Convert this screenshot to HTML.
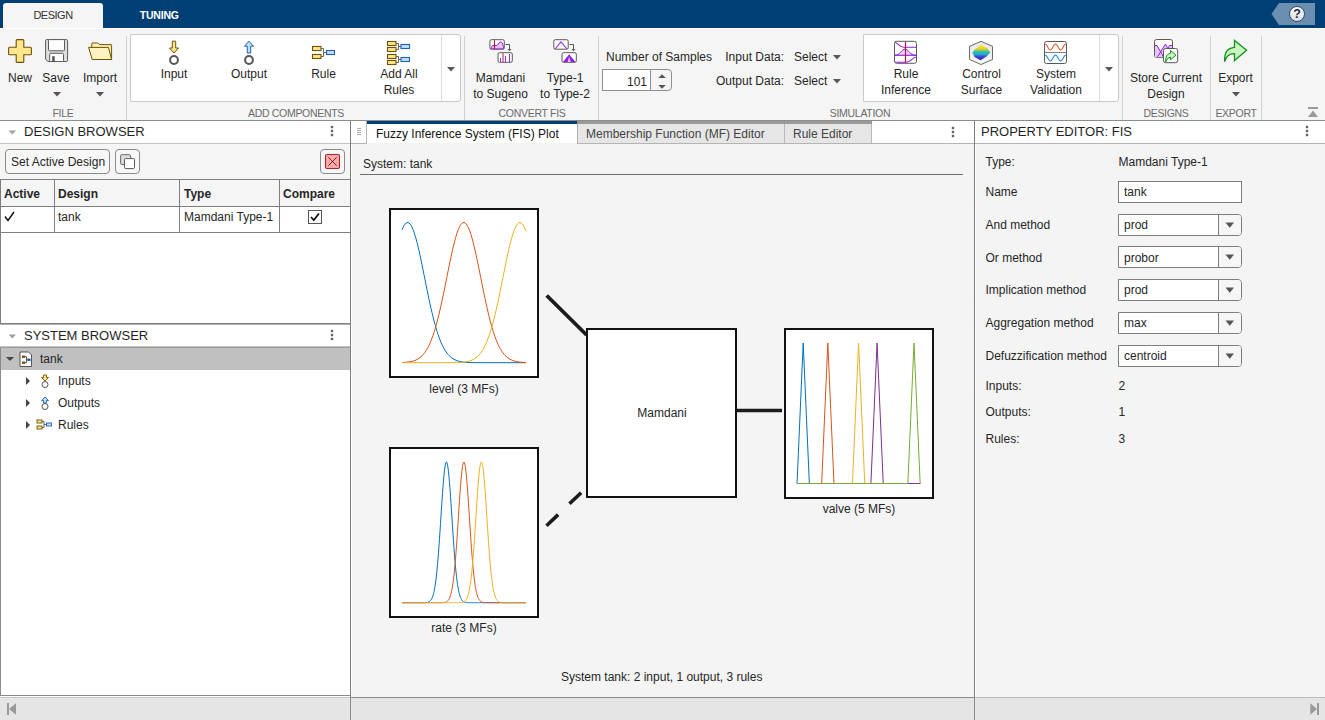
<!DOCTYPE html>
<html><head><meta charset="utf-8">
<style>
html,body{margin:0;padding:0}
body{width:1325px;height:720px;overflow:hidden;position:relative;background:#f5f5f5;font-family:"Liberation Sans",sans-serif;color:#262626}
.a{position:absolute}
.t{position:absolute;white-space:nowrap;line-height:1;font-size:12px}
.c{text-align:center;transform:translateX(-50%)}
.sec{position:absolute;white-space:nowrap;line-height:1;font-size:10.5px;letter-spacing:-0.3px;color:#6b6b6b;transform:translateX(-50%)}
.vs{position:absolute;width:1px;background:#cfcfcf;top:36px;height:84px}
svg{position:absolute;overflow:visible}
</style></head><body>
<!-- top blue bar -->
<div class="a" style="left:0;top:0;width:1325px;height:28px;background:#003f74"></div>
<div class="a" style="left:3px;top:3px;width:100px;height:26px;background:#f5f5f5;border-radius:3px 3px 0 0"></div>
<div class="t c" style="left:53px;top:10px;font-size:11px;letter-spacing:-0.5px;color:#333">DESIGN</div>
<div class="t c" style="left:159.3px;top:10px;font-size:10.5px;font-weight:bold;letter-spacing:-0.2px;color:#fff">TUNING</div>
<svg style="left:1271px;top:3px" width="45" height="22" viewBox="0 0 45 22">
 <path d="M0.5 11 L8 0 H44 V22 H8 Z" fill="#6b8fb1"/>
 <defs><linearGradient id="hg" x1="0" y1="0" x2="0" y2="1"><stop offset="0" stop-color="#ffffff"/><stop offset="1" stop-color="#d6dde3"/></linearGradient></defs>
 <circle cx="26" cy="11" r="7.5" fill="url(#hg)" stroke="#1c2f44" stroke-width="0.8"/>
 <text x="26" y="15" text-anchor="middle" font-family="Liberation Sans" font-weight="bold" font-size="12.5" fill="#1f2d3d">?</text>
</svg>
<!-- toolstrip -->
<div class="a" style="left:0;top:28px;width:1325px;height:1px;background:#ffffff"></div>
<div class="a" style="left:0;top:120px;width:1325px;height:1px;background:#8c8c8c"></div>
<div class="vs" style="left:126px"></div>
<div class="vs" style="left:464px"></div>
<div class="vs" style="left:598px"></div>
<div class="vs" style="left:1122px"></div>
<div class="vs" style="left:1210px"></div>
<div class="vs" style="left:1261px"></div>
<div class="sec" style="left:63px;top:108px">FILE</div>
<div class="sec" style="left:296px;top:108px">ADD COMPONENTS</div>
<div class="sec" style="left:532px;top:108px">CONVERT FIS</div>
<div class="sec" style="left:860px;top:108px">SIMULATION</div>
<div class="sec" style="left:1166px;top:108px">DESIGNS</div>
<div class="sec" style="left:1236px;top:108px">EXPORT</div>
<!-- galleries -->
<div class="a" style="left:130px;top:34px;width:329px;height:66px;background:#fff;border:1px solid #c9c9c9;border-radius:0 3px 3px 0"></div>
<div class="a" style="left:441px;top:35px;width:1px;height:66px;background:#dcdcdc"></div>
<div class="a" style="left:863px;top:34px;width:254px;height:66px;background:#fff;border:1px solid #c9c9c9;border-radius:0 3px 3px 0"></div>
<div class="a" style="left:1099px;top:35px;width:1px;height:66px;background:#dcdcdc"></div>
<!-- FILE -->
<svg style="left:8px;top:39px" width="24" height="24" viewBox="0 0 24 24">
 <path d="M9.2 0.6 H14.8 Q15.8 0.6 15.8 1.6 V8.2 H22.4 Q23.4 8.2 23.4 9.2 V14.8 Q23.4 15.8 22.4 15.8 H15.8 V22.4 Q15.8 23.4 14.8 23.4 H9.2 Q8.2 23.4 8.2 22.4 V15.8 H1.6 Q0.6 15.8 0.6 14.8 V9.2 Q0.6 8.2 1.6 8.2 H8.2 V1.6 Q8.2 0.6 9.2 0.6 Z" fill="#fde68c" stroke="#6e5200" stroke-width="1.1"/>
</svg>
<svg style="left:45px;top:39px" width="24" height="24" viewBox="0 0 24 24">
 <path d="M0.6 1.7 Q0.6 0.6 1.7 0.6 H21.5 Q22.6 0.6 22.6 1.7 V21.4 Q22.6 22.5 21.5 22.5 H3 L0.6 20.2 Z" fill="#dedede" stroke="#5a5a5a" stroke-width="1"/>
 <rect x="3.5" y="0.6" width="16" height="11.2" rx="1" fill="#fff" stroke="#5a5a5a" stroke-width="1"/>
 <rect x="4.7" y="14.3" width="13.8" height="8.2" rx="1" fill="#fff" stroke="#5a5a5a" stroke-width="1"/>
 <rect x="7.2" y="17.2" width="2.5" height="5.3" fill="#555"/>
</svg>
<svg style="left:88px;top:42px" width="25" height="19" viewBox="0 0 25 19">
 <path d="M3.8 5.5 V1.8 Q3.8 1 4.6 1 H9.6 L11.6 2.6 H23 Q23.6 2.6 23.6 3.2 V17.5 H6 L3.8 6 Z" fill="#fff0b8" stroke="#6e5200" stroke-width="1"/>
 <path d="M0.6 5.4 H20.5 L23.6 17.5 H4.2 Z" fill="#fff3bf" stroke="#6e5200" stroke-width="1"/>
</svg>
<div class="t c" style="left:20px;top:72px">New</div>
<div class="t c" style="left:56px;top:72px">Save</div>
<div class="t c" style="left:100px;top:72px">Import</div>
<svg style="left:53px;top:92px" width="8" height="5"><path d="M0 0H8L4 4.5Z" fill="#555"/></svg>
<svg style="left:96px;top:92px" width="8" height="5"><path d="M0 0H8L4 4.5Z" fill="#555"/></svg>
<!-- ADD COMPONENTS -->
<svg style="left:168px;top:40px" width="12" height="26" viewBox="0 0 12 26">
 <path d="M4.3 1.2 H7.7 V8 H10.5 L6 13 L1.5 8 H4.3 Z" fill="#fde68c" stroke="#6e5200" stroke-width="1"/>
 <circle cx="6" cy="20" r="3.9" fill="none" stroke="#555" stroke-width="2"/>
</svg>
<svg style="left:243px;top:40px" width="12" height="26" viewBox="0 0 12 26">
 <path d="M4.3 13 H7.7 V6.2 H10.5 L6 1.2 L1.5 6.2 H4.3 Z" fill="#bfe0fb" stroke="#1f5fb4" stroke-width="1"/>
 <circle cx="6" cy="20" r="3.9" fill="none" stroke="#555" stroke-width="2"/>
</svg>
<svg style="left:311px;top:45px" width="26" height="16" viewBox="0 0 26 16">
 <rect x="1.5" y="1.5" width="8.5" height="4" fill="#fde68c" stroke="#6e5200" stroke-width="1.1"/>
 <rect x="1.5" y="9.5" width="8.5" height="4" fill="#fde68c" stroke="#6e5200" stroke-width="1.1"/>
 <path d="M10 3.5 H12.5 V11.5 H10 M12.5 7.5 H15.5" fill="none" stroke="#666" stroke-width="1"/>
 <rect x="15.5" y="5.5" width="8" height="4" fill="#bfe0fb" stroke="#1f5fb4" stroke-width="1.1"/>
</svg>
<svg style="left:386px;top:40px" width="26" height="26" viewBox="0 0 26 26">
 <rect x="1.5" y="1.5" width="8.5" height="4" fill="#fde68c" stroke="#6e5200" stroke-width="1.1"/>
 <rect x="1.5" y="7.5" width="8.5" height="4" fill="#fde68c" stroke="#6e5200" stroke-width="1.1"/>
 <rect x="1.5" y="14.5" width="8.5" height="4" fill="#fde68c" stroke="#6e5200" stroke-width="1.1"/>
 <rect x="1.5" y="20.5" width="8.5" height="4" fill="#fde68c" stroke="#6e5200" stroke-width="1.1"/>
 <path d="M10 3.5 H12.5 V9.5 H10 M12.5 6.5 H15 M10 16.5 H12.5 V22.5 H10 M12.5 19.5 H15" fill="none" stroke="#666" stroke-width="1"/>
 <rect x="15" y="4.5" width="8.5" height="4" fill="#bfe0fb" stroke="#1f5fb4" stroke-width="1.1"/>
 <rect x="15" y="17.5" width="8.5" height="4" fill="#bfe0fb" stroke="#1f5fb4" stroke-width="1.1"/>
</svg>
<div class="t c" style="left:174px;top:68px">Input</div>
<div class="t c" style="left:249px;top:68px">Output</div>
<div class="t c" style="left:323.5px;top:68px">Rule</div>
<div class="t c" style="left:399px;top:68px">Add All</div>
<div class="t c" style="left:399px;top:84px">Rules</div>
<svg style="left:447px;top:67px" width="8" height="5"><path d="M0 0H8L4 4.5Z" fill="#555"/></svg>
<!-- CONVERT FIS -->
<svg style="left:488px;top:38px" width="26" height="26" viewBox="0 0 26 26">
 <rect x="1.9" y="1.7" width="14.4" height="9.5" rx="1.5" fill="#fff" stroke="#595959" stroke-width="1"/>
 <path d="M2.5 10.8 L4.5 7.5 H9 L11 5 Q13 2.5 14.5 5 L15.8 10.8 Z" fill="#e8c4f8" stroke="#9b2be0" stroke-width="1"/>
 <path d="M6.5 2.2 V11" stroke="#b0203a" stroke-width="1.1"/>
 <path d="M17.5 6.5 H21.5 V12" fill="none" stroke="#595959" stroke-width="1"/>
 <path d="M19.5 11 H23.5 L21.5 13.3 Z" fill="#595959"/>
 <rect x="10" y="14.7" width="14.3" height="9.6" rx="1.5" fill="#fff" stroke="#595959" stroke-width="1"/>
 <path d="M12.5 24 V20 M17.5 24 V18 M21.5 24 V16" stroke="#9b2be0" stroke-width="1"/>
 <path d="M15 24 V15.2" stroke="#b0203a" stroke-width="1"/>
</svg>
<svg style="left:552px;top:38px" width="26" height="26" viewBox="0 0 26 26">
 <rect x="1.8" y="1.7" width="14.4" height="9.5" rx="1.5" fill="#fff" stroke="#595959" stroke-width="1"/>
 <path d="M3 11 L9 3.8 L15 11" fill="none" stroke="#9b2be0" stroke-width="1.1"/>
 <path d="M17.5 6.5 H21.5 V12" fill="none" stroke="#595959" stroke-width="1"/>
 <path d="M19.5 11 H23.5 L21.5 13.3 Z" fill="#595959"/>
 <rect x="10" y="14.7" width="14.3" height="9.6" rx="1.5" fill="#fff" stroke="#595959" stroke-width="1"/>
 <path d="M11 24 L17.2 16.3 L23.4 24 Z" fill="#8d1fe0"/>
 <path d="M15.6 24 L17.2 18.5 L18.8 24 Z" fill="#e5c1fa"/>
</svg>
<div class="t c" style="left:500.5px;top:72px">Mamdani</div>
<div class="t c" style="left:500.5px;top:88px">to Sugeno</div>
<div class="t c" style="left:565px;top:72px">Type-1</div>
<div class="t c" style="left:565px;top:88px">to Type-2</div>
<!-- SIMULATION -->
<div class="t" style="left:606px;top:51px">Number of Samples</div>
<div class="a" style="left:602px;top:69px;width:50px;height:22px;box-sizing:border-box;background:#fff;border:1px solid #8f8f8f;border-right:0"></div>
<div class="a" style="left:650px;top:69px;width:22px;height:22px;box-sizing:border-box;background:#f5f5f5;border:1px solid #8f8f8f;border-radius:0 4px 4px 0"></div>
<div class="t" style="left:618px;top:76px;width:29px;text-align:right">101</div>
<svg style="left:656px;top:72px" width="12" height="18"><path d="M2.3 5.9 L6 2.2 L9.8 5.9Z M2.3 13 L6 16.75 L9.8 13Z" fill="#555"/></svg>
<div class="t" style="left:684px;top:51px;width:100px;text-align:right">Input Data:</div>
<div class="t" style="left:684px;top:75px;width:100px;text-align:right">Output Data:</div>
<div class="t" style="left:794px;top:51px">Select</div>
<div class="t" style="left:794px;top:75px">Select</div>
<svg style="left:833px;top:55px" width="8" height="5"><path d="M0 0H8L4 4.5Z" fill="#555"/></svg>
<svg style="left:833px;top:79px" width="8" height="5"><path d="M0 0H8L4 4.5Z" fill="#555"/></svg>
<svg style="left:893px;top:40px" width="25" height="25" viewBox="0 0 25 25">
 <rect x="1.5" y="1.3" width="22" height="22" rx="2.2" fill="#fff" stroke="#595959" stroke-width="1"/>
 <path d="M2 2.3 C5.5 3.5 6.5 7.3 11 7.3 H23.5" fill="none" stroke="#8f1fe0" stroke-width="1.1"/>
 <path d="M2 15.3 C7 15.3 9 9 12 9 C15 9 17 15.3 23 15.3 Z" fill="#ead0fa"/>
 <path d="M2 15.3 C7 15.3 9 9 12 9 C15 9 17 15.3 23 15.3" fill="none" stroke="#8f1fe0" stroke-width="1"/>
 <path d="M1.8 15.3 H23.5" stroke="#8f1fe0" stroke-width="1.1"/>
 <path d="M2 22.3 H13 C18 22.3 19 17 23.5 17" fill="none" stroke="#8f1fe0" stroke-width="1.1"/>
 <path d="M12.5 1.8 V22.8" stroke="#b01a3a" stroke-width="1.2"/>
</svg>
<svg style="left:968px;top:40px" width="26" height="26" viewBox="0 0 26 26">
 <defs><linearGradient id="cs" x1="0" y1="0" x2="0" y2="1"><stop offset="0" stop-color="#ffe81a"/><stop offset="0.25" stop-color="#e8d020"/><stop offset="0.45" stop-color="#2ec0a0"/><stop offset="0.62" stop-color="#20a8d0"/><stop offset="0.75" stop-color="#3a4ee0"/><stop offset="1" stop-color="#2c18a0"/></linearGradient>
 <linearGradient id="hx" x1="0" y1="0" x2="0" y2="1"><stop offset="0" stop-color="#e6e6e6"/><stop offset="1" stop-color="#f7f7f7"/></linearGradient></defs>
 <path d="M13 1.3 L24.5 6.3 V19.5 L13 24.5 L1.5 19.5 V6.3 Z" fill="url(#hx)" stroke="#6a6a6a" stroke-width="1"/>
 <path d="M13 5 L19.5 8.3 L22.3 12.5 L18.5 16.5 L12.5 20.2 L6.5 17 L4.3 12.5 L7 9.3 Z" fill="url(#cs)"/>
</svg>
<svg style="left:1043px;top:40px" width="25" height="25" viewBox="0 0 25 25">
 <rect x="1.5" y="1.5" width="22" height="22" rx="2" fill="#fff" stroke="#595959" stroke-width="1"/>
 <path d="M1.5 12.5 H23.5" stroke="#808080" stroke-width="1"/>
 <path d="M2.20 4.00 L2.72 4.15 L3.23 4.57 L3.75 5.24 L4.26 6.07 L4.78 7.00 L5.29 7.93 L5.81 8.76 L6.32 9.43 L6.83 9.85 L7.35 10.00 L7.87 9.85 L8.38 9.43 L8.89 8.76 L9.41 7.93 L9.93 7.00 L10.44 6.07 L10.96 5.24 L11.47 4.57 L11.98 4.15 L12.50 4.00 L13.02 4.15 L13.53 4.57 L14.05 5.24 L14.56 6.07 L15.07 7.00 L15.59 7.93 L16.11 8.76 L16.62 9.43 L17.14 9.85 L17.65 10.00 L18.16 9.85 L18.68 9.43 L19.20 8.76 L19.71 7.93 L20.22 7.00 L20.74 6.07 L21.25 5.24 L21.77 4.57 L22.29 4.15 L22.80 4.00" fill="none" stroke="#e5582a" stroke-width="1.1"/>
 <path d="M2.20 15.00 L2.72 15.15 L3.23 15.57 L3.75 16.24 L4.26 17.07 L4.78 18.00 L5.29 18.93 L5.81 19.76 L6.32 20.43 L6.83 20.85 L7.35 21.00 L7.87 20.85 L8.38 20.43 L8.89 19.76 L9.41 18.93 L9.93 18.00 L10.44 17.07 L10.96 16.24 L11.47 15.57 L11.98 15.15 L12.50 15.00 L13.02 15.15 L13.53 15.57 L14.05 16.24 L14.56 17.07 L15.07 18.00 L15.59 18.93 L16.11 19.76 L16.62 20.43 L17.14 20.85 L17.65 21.00 L18.16 20.85 L18.68 20.43 L19.20 19.76 L19.71 18.93 L20.22 18.00 L20.74 17.07 L21.25 16.24 L21.77 15.57 L22.29 15.15 L22.80 15.00" fill="none" stroke="#1e88d4" stroke-width="1.1"/>
</svg>
<div class="t c" style="left:906px;top:68px">Rule</div>
<div class="t c" style="left:906px;top:84px">Inference</div>
<div class="t c" style="left:981.5px;top:68px">Control</div>
<div class="t c" style="left:981.5px;top:84px">Surface</div>
<div class="t c" style="left:1056px;top:68px">System</div>
<div class="t c" style="left:1056px;top:84px">Validation</div>
<svg style="left:1105px;top:67px" width="8" height="5"><path d="M0 0H8L4 4.5Z" fill="#555"/></svg>
<!-- DESIGNS / EXPORT -->
<svg style="left:1153px;top:38px" width="26" height="26" viewBox="0 0 26 26">
 <rect x="1.5" y="1.5" width="18" height="17.8" rx="2" fill="#fff" stroke="#595959" stroke-width="1"/>
 <path d="M2 7.5 H4 L7.5 13 L12.5 6 L14.2 9.7 L16.5 7.5 H19 V18.8 H2 Z" fill="#e6c6fa"/>
 <path d="M2 7.5 H4 L10.5 18.8 M4.5 18.8 L12.5 6 L17 15 M10 18.8 L16.5 7.5 H19" fill="none" stroke="#9020e0" stroke-width="1"/>
 <rect x="10.5" y="10.5" width="14.2" height="14.2" rx="2" fill="#fff" stroke="#595959" stroke-width="1"/>
 <path d="M12.6 24 Q12.3 15.8 17.5 15.3 V12.5 L23 17.2 L17.5 21.8 V19.2 Q14.5 19 12.6 24 Z" fill="#c8f5c0" stroke="#14931b" stroke-width="1"/>
</svg>
<svg style="left:1223px;top:39px" width="25" height="24" viewBox="0 0 25 24">
 <path d="M1.6 22.6 Q0.8 9.2 11.5 8.4 V1.4 L23.6 11.3 L11.5 21.6 V14.6 Q3.6 14.4 1.6 22.6 Z" fill="#c8f5c0" stroke="#14931b" stroke-width="1.3" stroke-linejoin="miter"/>
</svg>
<div class="t c" style="left:1166px;top:72px">Store Current</div>
<div class="t c" style="left:1166px;top:88px">Design</div>
<div class="t c" style="left:1235.5px;top:72px">Export</div>
<svg style="left:1232px;top:92px" width="8" height="5"><path d="M0 0H8L4 4.5Z" fill="#555"/></svg>
<svg style="left:1307px;top:106px" width="12" height="12"><path d="M1 2H11" stroke="#9a9a9a" stroke-width="2"/><path d="M1 11H11L6 4.5Z" fill="#9a9a9a"/></svg>
<!-- LEFT PANEL -->
<div class="a" style="left:0;top:121px;width:350px;height:22px;background:#fff"></div>
<div class="a" style="left:0;top:143px;width:350px;height:1px;background:#c4c4c4"></div>
<svg style="left:8px;top:130px" width="9" height="5"><path d="M0.5 0.5H8L4.25 4.5Z" fill="#a0a0a0"/></svg>
<div class="t" style="left:24px;top:125px;font-size:13px;color:#1f1f1f">DESIGN BROWSER</div>
<svg style="left:330px;top:125px" width="4" height="12"><rect x="0.8" y="0.8" width="2.4" height="2.4" fill="#666"/><rect x="0.8" y="4.8" width="2.4" height="2.4" fill="#666"/><rect x="0.8" y="8.8" width="2.4" height="2.4" fill="#666"/></svg>
<div class="a" style="left:5px;top:149px;width:103px;height:23px;border:1px solid #8a8a8a;border-radius:4px;background:#f7f7f7"></div>
<div class="t" style="left:11px;top:156px">Set Active Design</div>
<div class="a" style="left:115px;top:149px;width:23px;height:23px;border:1px solid #8a8a8a;border-radius:4px;background:#f7f7f7"></div>
<svg style="left:119px;top:153px" width="18" height="18"><rect x="1.6" y="1.7" width="10" height="9.8" rx="1.2" fill="#dcdcdc" stroke="#6a6a6a" stroke-width="1"/><rect x="5.5" y="5.6" width="10" height="10" rx="1.2" fill="#fff" stroke="#5a5a5a" stroke-width="1"/></svg>
<div class="a" style="left:320px;top:149px;width:23px;height:23px;border:1px solid #8a8a8a;border-radius:4px;background:#f7f7f7"></div>
<svg style="left:324px;top:153px" width="17" height="17"><rect x="1.5" y="1.5" width="14" height="14" rx="1.5" fill="#fca8a8" stroke="#a82828" stroke-width="1.1"/><path d="M4.3 4.3L12.7 12.7M12.7 4.3L4.3 12.7" stroke="#5a1a1a" stroke-width="0.9"/></svg>
<!-- table -->
<div class="a" style="left:0;top:180px;width:350px;height:143px;background:#fff"></div>
<div class="a" style="left:0;top:179px;width:350px;height:27px;background:#f5f5f5"></div>
<div class="a" style="left:0;top:179px;width:350px;height:1px;background:#7f7f7f"></div>
<div class="a" style="left:0;top:206px;width:350px;height:1px;background:#7f7f7f"></div>
<div class="a" style="left:0;top:232px;width:350px;height:1px;background:#7f7f7f"></div>
<div class="a" style="left:0;top:323px;width:350px;height:1px;background:#7f7f7f"></div><div class="a" style="left:0;top:324px;width:350px;height:1px;background:#b0b0b0"></div>
<div class="a" style="left:0;top:179px;width:1px;height:145px;background:#7f7f7f"></div>
<div class="a" style="left:54px;top:179px;width:1px;height:54px;background:#7f7f7f"></div>
<div class="a" style="left:179px;top:179px;width:1px;height:54px;background:#7f7f7f"></div>
<div class="a" style="left:279px;top:179px;width:1px;height:54px;background:#7f7f7f"></div>
<div class="t" style="left:4px;top:188px;font-weight:bold">Active</div>
<div class="t" style="left:58px;top:188px;font-weight:bold">Design</div>
<div class="t" style="left:184px;top:188px;font-weight:bold">Type</div>
<div class="t" style="left:283px;top:188px;font-weight:bold">Compare</div>
<svg style="left:4px;top:211px" width="11" height="11"><path d="M1 5.5 L4 9.5 L10 1" fill="none" stroke="#111" stroke-width="1.5"/></svg>
<div class="t" style="left:58px;top:211px">tank</div>
<div class="t" style="left:184px;top:211px">Mamdani Type-1</div>
<svg style="left:308px;top:210px" width="14" height="14"><rect x="0.5" y="0.5" width="13" height="13" fill="#fff" stroke="#555" stroke-width="1"/><path d="M3 7 L5.8 10 L11 3.5" fill="none" stroke="#111" stroke-width="1.8"/></svg>
<!-- system browser -->
<div class="a" style="left:0;top:325px;width:350px;height:22px;background:#fff"></div>
<div class="a" style="left:0;top:346px;width:350px;height:1px;background:#c4c4c4"></div><div class="a" style="left:0;top:347px;width:350px;height:1px;background:#9a9a9a"></div>
<svg style="left:8px;top:334px" width="9" height="5"><path d="M0.5 0.5H8L4.25 4.5Z" fill="#a0a0a0"/></svg>
<div class="t" style="left:24px;top:329px;font-size:13px;color:#1f1f1f">SYSTEM BROWSER</div>
<svg style="left:330px;top:329px" width="4" height="12"><rect x="0.8" y="0.8" width="2.4" height="2.4" fill="#666"/><rect x="0.8" y="4.8" width="2.4" height="2.4" fill="#666"/><rect x="0.8" y="8.8" width="2.4" height="2.4" fill="#666"/></svg>
<div class="a" style="left:0;top:348px;width:350px;height:347px;background:#fff"></div>
<div class="a" style="left:0;top:348px;width:350px;height:22px;background:#c0c0c0"></div>
<div class="a" style="left:0;top:348px;width:1px;height:348px;background:#8a8a8a"></div>
<div class="a" style="left:0;top:695px;width:350px;height:1px;background:#8a8a8a"></div>
<svg style="left:6px;top:357px" width="9" height="5"><path d="M0 0H8L4 4Z" fill="#444"/></svg>
<svg style="left:19px;top:351px" width="14" height="17"><path d="M1 1H9.5L12.5 4V15.5H1Z" fill="#fff" stroke="#555" stroke-width="1"/><rect x="3" y="4.5" width="3" height="2.5" fill="#7a5a10"/><rect x="3" y="10.5" width="3" height="2.5" fill="#7a5a10"/><path d="M6 5.7H7.5V11.7H6M7.5 8.7H9" stroke="#555" stroke-width="1" fill="none"/><rect x="8.5" y="7.5" width="3" height="2.5" fill="#1f5fb4"/></svg>
<div class="t" style="left:40px;top:352.5px">tank</div>
<svg style="left:26px;top:377px" width="5" height="9"><path d="M0 0V8L4 4Z" fill="#444"/></svg>
<svg style="left:40px;top:374px" width="10" height="15"><path d="M3.5 1H6.5V3.5H8.5L5 7L1.5 3.5H3.5Z" fill="#fde68c" stroke="#6e5200" stroke-width="0.9"/><circle cx="5" cy="10.5" r="3" fill="none" stroke="#555" stroke-width="1"/></svg>
<div class="t" style="left:58px;top:374.5px">Inputs</div>
<svg style="left:26px;top:399px" width="5" height="9"><path d="M0 0V8L4 4Z" fill="#444"/></svg>
<svg style="left:40px;top:396px" width="10" height="15"><path d="M3.5 7H6.5V4.5H8.5L5 1L1.5 4.5H3.5Z" fill="#bfe0fb" stroke="#1f5fb4" stroke-width="0.9"/><circle cx="5" cy="10.5" r="3" fill="none" stroke="#555" stroke-width="1"/></svg>
<div class="t" style="left:58px;top:396.5px">Outputs</div>
<svg style="left:26px;top:421px" width="5" height="9"><path d="M0 0V8L4 4Z" fill="#444"/></svg>
<svg style="left:36px;top:419px" width="18" height="11"><rect x="1" y="1" width="5" height="3" fill="#fde68c" stroke="#6e5200" stroke-width="0.9"/><rect x="1" y="7" width="5" height="3" fill="#fde68c" stroke="#6e5200" stroke-width="0.9"/><path d="M6 2.5H8V8.5H6M8 5.5H10" stroke="#555" stroke-width="0.9" fill="none"/><rect x="10.5" y="4" width="5" height="3" fill="#bfe0fb" stroke="#1f5fb4" stroke-width="0.9"/></svg>
<div class="t" style="left:58px;top:418.5px">Rules</div>
<!-- borders between panels -->
<div class="a" style="left:350px;top:121px;width:1px;height:599px;background:#7c7c7c"></div>
<!-- MIDDLE PANEL -->
<div class="a" style="left:351px;top:121px;width:623px;height:576px;background:#f4f4f4;border-left:1px solid #fff;box-sizing:border-box"></div>
<div class="a" style="left:351px;top:121px;width:623px;height:22px;background:#fff"></div>
<div class="a" style="left:351px;top:143px;width:16px;height:1px;background:#b4b4b4"></div><div class="a" style="left:871px;top:143px;width:103px;height:1px;background:#b4b4b4"></div>
<div class="a" style="left:351px;top:121px;width:16px;height:23px;box-sizing:border-box;border-right:1px solid #b4b4b4;border-bottom:1px solid #b4b4b4;border-radius:0 0 2px 0;background:#fff"></div>
<svg style="left:357px;top:128px" width="5" height="8"><path d="M0 0.5H4M0 2.5H4M0 4.5H4M0 6.5H4" stroke="#999" stroke-width="0.8"/></svg>
<div class="a" style="left:367px;top:121px;width:210px;height:3px;background:#003f74"></div>
<div class="t" style="left:376px;top:128px;color:#111">Fuzzy Inference System (FIS) Plot</div>
<div class="a" style="left:577px;top:121px;width:294px;height:23px;background:#e6e6e6;border-left:1px solid #b0b0b0;box-sizing:border-box"></div>
<div class="a" style="left:577px;top:121px;width:295px;height:3px;background:#999"></div>
<div class="a" style="left:784px;top:124px;width:1px;height:19px;background:#b8b8b8"></div>
<div class="a" style="left:871px;top:124px;width:1px;height:19px;background:#b8b8b8"></div>
<div class="a" style="left:577px;top:143px;width:295px;height:1px;background:#b4b4b4"></div>
<div class="t" style="left:586px;top:128px;color:#444">Membership Function (MF) Editor</div>
<div class="t" style="left:793px;top:128px;color:#444">Rule Editor</div>
<svg style="left:951px;top:126px" width="4" height="12"><rect x="0.8" y="0.8" width="2.4" height="2.4" fill="#666"/><rect x="0.8" y="4.8" width="2.4" height="2.4" fill="#666"/><rect x="0.8" y="8.8" width="2.4" height="2.4" fill="#666"/></svg>
<div class="t" style="left:363px;top:157.5px">System: tank</div>
<div class="a" style="left:360px;top:174px;width:603px;height:1px;background:#6e6e6e"></div>
<!-- FIS_PLOT -->
<svg style="left:351px;top:176px" width="623" height="500" viewBox="351 176 623 500">
 <rect x="390" y="209" width="148" height="168" fill="#fff" stroke="#111" stroke-width="2"/>
 <rect x="390" y="448" width="148" height="169" fill="#fff" stroke="#111" stroke-width="2"/>
 <rect x="587" y="329" width="149" height="168" fill="#fff" stroke="#111" stroke-width="2"/>
 <rect x="785" y="329" width="148" height="169" fill="#fff" stroke="#111" stroke-width="2"/>
 <line x1="546.7" y1="295.5" x2="586.6" y2="335" stroke="#1c1c1c" stroke-width="3.8"/>
 <line x1="546.5" y1="525.8" x2="586" y2="488" stroke="#1c1c1c" stroke-width="3.6" stroke-dasharray="16.1 15.7"/>
 <line x1="737" y1="410.5" x2="782" y2="410.5" stroke="#1c1c1c" stroke-width="3.7"/>
<path d="M402.0 229.90 L403.0 227.54 L404.0 225.61 L405.0 224.13 L406.0 223.12 L407.0 222.59 L408.0 222.54 L409.0 222.97 L410.0 223.89 L411.0 225.28 L412.0 227.12 L413.0 229.40 L414.0 232.09 L415.0 235.17 L416.0 238.61 L417.0 242.37 L418.0 246.43 L419.0 250.73 L420.0 255.25 L421.0 259.94 L422.0 264.76 L423.0 269.69 L424.0 274.66 L425.0 279.66 L426.0 284.65 L427.0 289.59 L428.0 294.46 L429.0 299.22 L430.0 303.85 L431.0 308.33 L432.0 312.65 L433.0 316.78 L434.0 320.72 L435.0 324.45 L436.0 327.97 L437.0 331.27 L438.0 334.36 L439.0 337.24 L440.0 339.90 L441.0 342.35 L442.0 344.60 L443.0 346.66 L444.0 348.54 L445.0 350.23 L446.0 351.77 L447.0 353.14 L448.0 354.37 L449.0 355.47 L450.0 356.45 L451.0 357.31 L452.0 358.07 L453.0 358.74 L454.0 359.32 L455.0 359.83 L456.0 360.26 L457.0 360.64 L458.0 360.97 L459.0 361.25 L460.0 361.49 L461.0 361.69 L462.0 361.86 L463.0 362.01 L464.0 362.13 L465.0 362.23 L466.0 362.32 L467.0 362.39 L468.0 362.45 L469.0 362.49 L470.0 362.53 L471.0 362.57 L472.0 362.59 L473.0 362.61 L474.0 362.63 L475.0 362.65 L476.0 362.66 L477.0 362.67 L478.0 362.67 L479.0 362.68 L480.0 362.68 L481.0 362.69 L482.0 362.69 L483.0 362.69 L484.0 362.69 L485.0 362.70 L486.0 362.70 L487.0 362.70 L488.0 362.70 L489.0 362.70 L490.0 362.70 L491.0 362.70 L492.0 362.70 L493.0 362.70 L494.0 362.70 L495.0 362.70 L496.0 362.70 L497.0 362.70 L498.0 362.70 L499.0 362.70 L500.0 362.70 L501.0 362.70 L502.0 362.70 L503.0 362.70 L504.0 362.70 L505.0 362.70 L506.0 362.70 L507.0 362.70 L508.0 362.70 L509.0 362.70 L510.0 362.70 L511.0 362.70 L512.0 362.70 L513.0 362.70 L514.0 362.70 L515.0 362.70 L516.0 362.70 L517.0 362.70 L518.0 362.70 L519.0 362.70 L520.0 362.70 L521.0 362.70 L522.0 362.70 L523.0 362.70 L524.0 362.70 L525.0 362.70 L526.0 362.70" fill="none" stroke="#0072bd" stroke-width="1"/>
<path d="M402.0 362.51 L403.0 362.46 L404.0 362.41 L405.0 362.34 L406.0 362.26 L407.0 362.17 L408.0 362.05 L409.0 361.92 L410.0 361.75 L411.0 361.56 L412.0 361.34 L413.0 361.07 L414.0 360.76 L415.0 360.40 L416.0 359.99 L417.0 359.50 L418.0 358.95 L419.0 358.31 L420.0 357.59 L421.0 356.76 L422.0 355.83 L423.0 354.77 L424.0 353.59 L425.0 352.26 L426.0 350.79 L427.0 349.15 L428.0 347.34 L429.0 345.35 L430.0 343.16 L431.0 340.78 L432.0 338.19 L433.0 335.39 L434.0 332.38 L435.0 329.15 L436.0 325.71 L437.0 322.05 L438.0 318.18 L439.0 314.12 L440.0 309.86 L441.0 305.44 L442.0 300.86 L443.0 296.14 L444.0 291.31 L445.0 286.39 L446.0 281.41 L447.0 276.41 L448.0 271.42 L449.0 266.48 L450.0 261.61 L451.0 256.87 L452.0 252.29 L453.0 247.91 L454.0 243.76 L455.0 239.89 L456.0 236.34 L457.0 233.13 L458.0 230.29 L459.0 227.87 L460.0 225.87 L461.0 224.32 L462.0 223.24 L463.0 222.64 L464.0 222.52 L465.0 222.88 L466.0 223.72 L467.0 225.04 L468.0 226.81 L469.0 229.03 L470.0 231.66 L471.0 234.69 L472.0 238.07 L473.0 241.79 L474.0 245.80 L475.0 250.07 L476.0 254.56 L477.0 259.23 L478.0 264.03 L479.0 268.94 L480.0 273.92 L481.0 278.91 L482.0 283.91 L483.0 288.86 L484.0 293.73 L485.0 298.51 L486.0 303.17 L487.0 307.67 L488.0 312.01 L489.0 316.17 L490.0 320.14 L491.0 323.90 L492.0 327.45 L493.0 330.79 L494.0 333.91 L495.0 336.82 L496.0 339.51 L497.0 342.00 L498.0 344.28 L499.0 346.37 L500.0 348.27 L501.0 349.99 L502.0 351.55 L503.0 352.95 L504.0 354.20 L505.0 355.32 L506.0 356.31 L507.0 357.19 L508.0 357.96 L509.0 358.64 L510.0 359.24 L511.0 359.75 L512.0 360.20 L513.0 360.59 L514.0 360.92 L515.0 361.21 L516.0 361.45 L517.0 361.66 L518.0 361.84 L519.0 361.99 L520.0 362.11 L521.0 362.22 L522.0 362.30 L523.0 362.38 L524.0 362.44 L525.0 362.49 L526.0 362.53" fill="none" stroke="#d95319" stroke-width="1"/>
<path d="M402.0 362.70 L403.0 362.70 L404.0 362.70 L405.0 362.70 L406.0 362.70 L407.0 362.70 L408.0 362.70 L409.0 362.70 L410.0 362.70 L411.0 362.70 L412.0 362.70 L413.0 362.70 L414.0 362.70 L415.0 362.70 L416.0 362.70 L417.0 362.70 L418.0 362.70 L419.0 362.70 L420.0 362.70 L421.0 362.70 L422.0 362.70 L423.0 362.70 L424.0 362.70 L425.0 362.70 L426.0 362.70 L427.0 362.70 L428.0 362.70 L429.0 362.70 L430.0 362.70 L431.0 362.70 L432.0 362.70 L433.0 362.70 L434.0 362.70 L435.0 362.70 L436.0 362.70 L437.0 362.70 L438.0 362.70 L439.0 362.70 L440.0 362.70 L441.0 362.70 L442.0 362.70 L443.0 362.69 L444.0 362.69 L445.0 362.69 L446.0 362.69 L447.0 362.69 L448.0 362.68 L449.0 362.68 L450.0 362.67 L451.0 362.66 L452.0 362.65 L453.0 362.64 L454.0 362.62 L455.0 362.60 L456.0 362.58 L457.0 362.55 L458.0 362.51 L459.0 362.47 L460.0 362.42 L461.0 362.35 L462.0 362.28 L463.0 362.18 L464.0 362.07 L465.0 361.94 L466.0 361.78 L467.0 361.59 L468.0 361.37 L469.0 361.11 L470.0 360.81 L471.0 360.46 L472.0 360.05 L473.0 359.58 L474.0 359.04 L475.0 358.41 L476.0 357.70 L477.0 356.89 L478.0 355.98 L479.0 354.94 L480.0 353.78 L481.0 352.47 L482.0 351.02 L483.0 349.41 L484.0 347.62 L485.0 345.66 L486.0 343.50 L487.0 341.15 L488.0 338.59 L489.0 335.83 L490.0 332.85 L491.0 329.65 L492.0 326.24 L493.0 322.61 L494.0 318.77 L495.0 314.74 L496.0 310.51 L497.0 306.11 L498.0 301.55 L499.0 296.85 L500.0 292.04 L501.0 287.13 L502.0 282.16 L503.0 277.16 L504.0 272.17 L505.0 267.21 L506.0 262.34 L507.0 257.57 L508.0 252.96 L509.0 248.55 L510.0 244.37 L511.0 240.45 L512.0 236.85 L513.0 233.59 L514.0 230.69 L515.0 228.20 L516.0 226.14 L517.0 224.53 L518.0 223.37 L519.0 222.70 L520.0 222.50 L521.0 222.79 L522.0 223.57 L523.0 224.81 L524.0 226.52 L525.0 228.67 L526.0 231.24" fill="none" stroke="#edb120" stroke-width="1"/>
<path d="M402.0 602.70 L402.5 602.70 L403.0 602.70 L403.5 602.70 L404.0 602.70 L404.5 602.70 L405.0 602.70 L405.5 602.70 L406.0 602.70 L406.5 602.70 L407.0 602.70 L407.5 602.70 L408.0 602.70 L408.5 602.70 L409.0 602.70 L409.5 602.70 L410.0 602.70 L410.5 602.70 L411.0 602.70 L411.5 602.70 L412.0 602.70 L412.5 602.70 L413.0 602.70 L413.5 602.70 L414.0 602.70 L414.5 602.70 L415.0 602.70 L415.5 602.70 L416.0 602.70 L416.5 602.70 L417.0 602.70 L417.5 602.70 L418.0 602.70 L418.5 602.70 L419.0 602.70 L419.5 602.70 L420.0 602.70 L420.5 602.70 L421.0 602.70 L421.5 602.70 L422.0 602.69 L422.5 602.69 L423.0 602.68 L423.5 602.68 L424.0 602.66 L424.5 602.65 L425.0 602.63 L425.5 602.60 L426.0 602.56 L426.5 602.50 L427.0 602.42 L427.5 602.32 L428.0 602.18 L428.5 601.99 L429.0 601.76 L429.5 601.45 L430.0 601.05 L430.5 600.54 L431.0 599.91 L431.5 599.11 L432.0 598.13 L432.5 596.93 L433.0 595.47 L433.5 593.71 L434.0 591.62 L434.5 589.16 L435.0 586.28 L435.5 582.96 L436.0 579.16 L436.5 574.86 L437.0 570.04 L437.5 564.71 L438.0 558.87 L438.5 552.55 L439.0 545.79 L439.5 538.65 L440.0 531.21 L440.5 523.56 L441.0 515.81 L441.5 508.09 L442.0 500.53 L442.5 493.28 L443.0 486.47 L443.5 480.26 L444.0 474.78 L444.5 470.15 L445.0 466.49 L445.5 463.87 L446.0 462.37 L446.5 462.02 L447.0 462.83 L447.5 464.79 L448.0 467.83 L448.5 471.89 L449.0 476.87 L449.5 482.66 L450.0 489.13 L450.5 496.13 L451.0 503.53 L451.5 511.17 L452.0 518.91 L452.5 526.63 L453.0 534.21 L453.5 541.55 L454.0 548.54 L454.5 555.13 L455.0 561.26 L455.5 566.90 L456.0 572.03 L456.5 576.64 L457.0 580.74 L457.5 584.34 L458.0 587.48 L458.5 590.19 L459.0 592.50 L459.5 594.45 L460.0 596.08 L460.5 597.44 L461.0 598.55 L461.5 599.45 L462.0 600.18 L462.5 600.76 L463.0 601.22 L463.5 601.58 L464.0 601.86 L464.5 602.07 L465.0 602.24 L465.5 602.36 L466.0 602.45 L466.5 602.52 L467.0 602.57 L467.5 602.61 L468.0 602.64 L468.5 602.66 L469.0 602.67 L469.5 602.68 L470.0 602.69 L470.5 602.69 L471.0 602.69 L471.5 602.70 L472.0 602.70 L472.5 602.70 L473.0 602.70 L473.5 602.70 L474.0 602.70 L474.5 602.70 L475.0 602.70 L475.5 602.70 L476.0 602.70 L476.5 602.70 L477.0 602.70 L477.5 602.70 L478.0 602.70 L478.5 602.70 L479.0 602.70 L479.5 602.70 L480.0 602.70 L480.5 602.70 L481.0 602.70 L481.5 602.70 L482.0 602.70 L482.5 602.70 L483.0 602.70 L483.5 602.70 L484.0 602.70 L484.5 602.70 L485.0 602.70 L485.5 602.70 L486.0 602.70 L486.5 602.70 L487.0 602.70 L487.5 602.70 L488.0 602.70 L488.5 602.70 L489.0 602.70 L489.5 602.70 L490.0 602.70 L490.5 602.70 L491.0 602.70 L491.5 602.70 L492.0 602.70 L492.5 602.70 L493.0 602.70 L493.5 602.70 L494.0 602.70 L494.5 602.70 L495.0 602.70 L495.5 602.70 L496.0 602.70 L496.5 602.70 L497.0 602.70 L497.5 602.70 L498.0 602.70 L498.5 602.70 L499.0 602.70 L499.5 602.70 L500.0 602.70 L500.5 602.70 L501.0 602.70 L501.5 602.70 L502.0 602.70 L502.5 602.70 L503.0 602.70 L503.5 602.70 L504.0 602.70 L504.5 602.70 L505.0 602.70 L505.5 602.70 L506.0 602.70 L506.5 602.70 L507.0 602.70 L507.5 602.70 L508.0 602.70 L508.5 602.70 L509.0 602.70 L509.5 602.70 L510.0 602.70 L510.5 602.70 L511.0 602.70 L511.5 602.70 L512.0 602.70 L512.5 602.70 L513.0 602.70 L513.5 602.70 L514.0 602.70 L514.5 602.70 L515.0 602.70 L515.5 602.70 L516.0 602.70 L516.5 602.70 L517.0 602.70 L517.5 602.70 L518.0 602.70 L518.5 602.70 L519.0 602.70 L519.5 602.70 L520.0 602.70 L520.5 602.70 L521.0 602.70 L521.5 602.70 L522.0 602.70 L522.5 602.70 L523.0 602.70 L523.5 602.70 L524.0 602.70 L524.5 602.70 L525.0 602.70 L525.5 602.70 L526.0 602.70" fill="none" stroke="#0072bd" stroke-width="1"/>
<path d="M402.0 602.70 L402.5 602.70 L403.0 602.70 L403.5 602.70 L404.0 602.70 L404.5 602.70 L405.0 602.70 L405.5 602.70 L406.0 602.70 L406.5 602.70 L407.0 602.70 L407.5 602.70 L408.0 602.70 L408.5 602.70 L409.0 602.70 L409.5 602.70 L410.0 602.70 L410.5 602.70 L411.0 602.70 L411.5 602.70 L412.0 602.70 L412.5 602.70 L413.0 602.70 L413.5 602.70 L414.0 602.70 L414.5 602.70 L415.0 602.70 L415.5 602.70 L416.0 602.70 L416.5 602.70 L417.0 602.70 L417.5 602.70 L418.0 602.70 L418.5 602.70 L419.0 602.70 L419.5 602.70 L420.0 602.70 L420.5 602.70 L421.0 602.70 L421.5 602.70 L422.0 602.70 L422.5 602.70 L423.0 602.70 L423.5 602.70 L424.0 602.70 L424.5 602.70 L425.0 602.70 L425.5 602.70 L426.0 602.70 L426.5 602.70 L427.0 602.70 L427.5 602.70 L428.0 602.70 L428.5 602.70 L429.0 602.70 L429.5 602.70 L430.0 602.70 L430.5 602.70 L431.0 602.70 L431.5 602.70 L432.0 602.70 L432.5 602.70 L433.0 602.70 L433.5 602.70 L434.0 602.70 L434.5 602.70 L435.0 602.70 L435.5 602.70 L436.0 602.70 L436.5 602.70 L437.0 602.70 L437.5 602.70 L438.0 602.70 L438.5 602.70 L439.0 602.70 L439.5 602.69 L440.0 602.69 L440.5 602.68 L441.0 602.68 L441.5 602.66 L442.0 602.65 L442.5 602.63 L443.0 602.60 L443.5 602.56 L444.0 602.50 L444.5 602.42 L445.0 602.32 L445.5 602.18 L446.0 601.99 L446.5 601.76 L447.0 601.45 L447.5 601.05 L448.0 600.54 L448.5 599.91 L449.0 599.11 L449.5 598.13 L450.0 596.93 L450.5 595.47 L451.0 593.71 L451.5 591.62 L452.0 589.16 L452.5 586.28 L453.0 582.96 L453.5 579.16 L454.0 574.86 L454.5 570.04 L455.0 564.71 L455.5 558.87 L456.0 552.55 L456.5 545.79 L457.0 538.65 L457.5 531.21 L458.0 523.56 L458.5 515.81 L459.0 508.09 L459.5 500.53 L460.0 493.28 L460.5 486.47 L461.0 480.26 L461.5 474.78 L462.0 470.15 L462.5 466.49 L463.0 463.87 L463.5 462.37 L464.0 462.02 L464.5 462.83 L465.0 464.79 L465.5 467.83 L466.0 471.89 L466.5 476.87 L467.0 482.66 L467.5 489.13 L468.0 496.13 L468.5 503.53 L469.0 511.17 L469.5 518.91 L470.0 526.63 L470.5 534.21 L471.0 541.55 L471.5 548.54 L472.0 555.13 L472.5 561.26 L473.0 566.90 L473.5 572.03 L474.0 576.64 L474.5 580.74 L475.0 584.34 L475.5 587.48 L476.0 590.19 L476.5 592.50 L477.0 594.45 L477.5 596.08 L478.0 597.44 L478.5 598.55 L479.0 599.45 L479.5 600.18 L480.0 600.76 L480.5 601.22 L481.0 601.58 L481.5 601.86 L482.0 602.07 L482.5 602.24 L483.0 602.36 L483.5 602.45 L484.0 602.52 L484.5 602.57 L485.0 602.61 L485.5 602.64 L486.0 602.66 L486.5 602.67 L487.0 602.68 L487.5 602.69 L488.0 602.69 L488.5 602.69 L489.0 602.70 L489.5 602.70 L490.0 602.70 L490.5 602.70 L491.0 602.70 L491.5 602.70 L492.0 602.70 L492.5 602.70 L493.0 602.70 L493.5 602.70 L494.0 602.70 L494.5 602.70 L495.0 602.70 L495.5 602.70 L496.0 602.70 L496.5 602.70 L497.0 602.70 L497.5 602.70 L498.0 602.70 L498.5 602.70 L499.0 602.70 L499.5 602.70 L500.0 602.70 L500.5 602.70 L501.0 602.70 L501.5 602.70 L502.0 602.70 L502.5 602.70 L503.0 602.70 L503.5 602.70 L504.0 602.70 L504.5 602.70 L505.0 602.70 L505.5 602.70 L506.0 602.70 L506.5 602.70 L507.0 602.70 L507.5 602.70 L508.0 602.70 L508.5 602.70 L509.0 602.70 L509.5 602.70 L510.0 602.70 L510.5 602.70 L511.0 602.70 L511.5 602.70 L512.0 602.70 L512.5 602.70 L513.0 602.70 L513.5 602.70 L514.0 602.70 L514.5 602.70 L515.0 602.70 L515.5 602.70 L516.0 602.70 L516.5 602.70 L517.0 602.70 L517.5 602.70 L518.0 602.70 L518.5 602.70 L519.0 602.70 L519.5 602.70 L520.0 602.70 L520.5 602.70 L521.0 602.70 L521.5 602.70 L522.0 602.70 L522.5 602.70 L523.0 602.70 L523.5 602.70 L524.0 602.70 L524.5 602.70 L525.0 602.70 L525.5 602.70 L526.0 602.70" fill="none" stroke="#d95319" stroke-width="1"/>
<path d="M402.0 602.70 L402.5 602.70 L403.0 602.70 L403.5 602.70 L404.0 602.70 L404.5 602.70 L405.0 602.70 L405.5 602.70 L406.0 602.70 L406.5 602.70 L407.0 602.70 L407.5 602.70 L408.0 602.70 L408.5 602.70 L409.0 602.70 L409.5 602.70 L410.0 602.70 L410.5 602.70 L411.0 602.70 L411.5 602.70 L412.0 602.70 L412.5 602.70 L413.0 602.70 L413.5 602.70 L414.0 602.70 L414.5 602.70 L415.0 602.70 L415.5 602.70 L416.0 602.70 L416.5 602.70 L417.0 602.70 L417.5 602.70 L418.0 602.70 L418.5 602.70 L419.0 602.70 L419.5 602.70 L420.0 602.70 L420.5 602.70 L421.0 602.70 L421.5 602.70 L422.0 602.70 L422.5 602.70 L423.0 602.70 L423.5 602.70 L424.0 602.70 L424.5 602.70 L425.0 602.70 L425.5 602.70 L426.0 602.70 L426.5 602.70 L427.0 602.70 L427.5 602.70 L428.0 602.70 L428.5 602.70 L429.0 602.70 L429.5 602.70 L430.0 602.70 L430.5 602.70 L431.0 602.70 L431.5 602.70 L432.0 602.70 L432.5 602.70 L433.0 602.70 L433.5 602.70 L434.0 602.70 L434.5 602.70 L435.0 602.70 L435.5 602.70 L436.0 602.70 L436.5 602.70 L437.0 602.70 L437.5 602.70 L438.0 602.70 L438.5 602.70 L439.0 602.70 L439.5 602.70 L440.0 602.70 L440.5 602.70 L441.0 602.70 L441.5 602.70 L442.0 602.70 L442.5 602.70 L443.0 602.70 L443.5 602.70 L444.0 602.70 L444.5 602.70 L445.0 602.70 L445.5 602.70 L446.0 602.70 L446.5 602.70 L447.0 602.70 L447.5 602.70 L448.0 602.70 L448.5 602.70 L449.0 602.70 L449.5 602.70 L450.0 602.70 L450.5 602.70 L451.0 602.70 L451.5 602.70 L452.0 602.70 L452.5 602.70 L453.0 602.70 L453.5 602.70 L454.0 602.70 L454.5 602.70 L455.0 602.70 L455.5 602.70 L456.0 602.70 L456.5 602.70 L457.0 602.69 L457.5 602.69 L458.0 602.68 L458.5 602.68 L459.0 602.66 L459.5 602.65 L460.0 602.63 L460.5 602.60 L461.0 602.56 L461.5 602.50 L462.0 602.42 L462.5 602.32 L463.0 602.18 L463.5 601.99 L464.0 601.76 L464.5 601.45 L465.0 601.05 L465.5 600.54 L466.0 599.91 L466.5 599.11 L467.0 598.13 L467.5 596.93 L468.0 595.47 L468.5 593.71 L469.0 591.62 L469.5 589.16 L470.0 586.28 L470.5 582.96 L471.0 579.16 L471.5 574.86 L472.0 570.04 L472.5 564.71 L473.0 558.87 L473.5 552.55 L474.0 545.79 L474.5 538.65 L475.0 531.21 L475.5 523.56 L476.0 515.81 L476.5 508.09 L477.0 500.53 L477.5 493.28 L478.0 486.47 L478.5 480.26 L479.0 474.78 L479.5 470.15 L480.0 466.49 L480.5 463.87 L481.0 462.37 L481.5 462.02 L482.0 462.83 L482.5 464.79 L483.0 467.83 L483.5 471.89 L484.0 476.87 L484.5 482.66 L485.0 489.13 L485.5 496.13 L486.0 503.53 L486.5 511.17 L487.0 518.91 L487.5 526.63 L488.0 534.21 L488.5 541.55 L489.0 548.54 L489.5 555.13 L490.0 561.26 L490.5 566.90 L491.0 572.03 L491.5 576.64 L492.0 580.74 L492.5 584.34 L493.0 587.48 L493.5 590.19 L494.0 592.50 L494.5 594.45 L495.0 596.08 L495.5 597.44 L496.0 598.55 L496.5 599.45 L497.0 600.18 L497.5 600.76 L498.0 601.22 L498.5 601.58 L499.0 601.86 L499.5 602.07 L500.0 602.24 L500.5 602.36 L501.0 602.45 L501.5 602.52 L502.0 602.57 L502.5 602.61 L503.0 602.64 L503.5 602.66 L504.0 602.67 L504.5 602.68 L505.0 602.69 L505.5 602.69 L506.0 602.69 L506.5 602.70 L507.0 602.70 L507.5 602.70 L508.0 602.70 L508.5 602.70 L509.0 602.70 L509.5 602.70 L510.0 602.70 L510.5 602.70 L511.0 602.70 L511.5 602.70 L512.0 602.70 L512.5 602.70 L513.0 602.70 L513.5 602.70 L514.0 602.70 L514.5 602.70 L515.0 602.70 L515.5 602.70 L516.0 602.70 L516.5 602.70 L517.0 602.70 L517.5 602.70 L518.0 602.70 L518.5 602.70 L519.0 602.70 L519.5 602.70 L520.0 602.70 L520.5 602.70 L521.0 602.70 L521.5 602.70 L522.0 602.70 L522.5 602.70 L523.0 602.70 L523.5 602.70 L524.0 602.70 L524.5 602.70 L525.0 602.70 L525.5 602.70 L526.0 602.70" fill="none" stroke="#edb120" stroke-width="1"/>
<path d="M797.04 483.5 L797.04 483.5 L803.20 343 L809.35 483.5 L920.16 483.5" fill="none" stroke="#0072bd" stroke-width="1"/>
<path d="M797.04 483.5 L821.66 483.5 L827.82 343 L833.98 483.5 L920.16 483.5" fill="none" stroke="#d95319" stroke-width="1"/>
<path d="M797.04 483.5 L852.44 483.5 L858.60 343 L864.76 483.5 L920.16 483.5" fill="none" stroke="#edb120" stroke-width="1"/>
<path d="M797.04 483.5 L870.91 483.5 L877.07 343 L883.22 483.5 L920.16 483.5" fill="none" stroke="#7e2f8e" stroke-width="1"/>
<path d="M797.04 483.5 L907.85 483.5 L914.00 343 L920.16 483.5 L920.16 483.5" fill="none" stroke="#77ac30" stroke-width="1"/>
</svg>
<div class="t c" style="left:464px;top:382.5px">level (3 MFs)</div>
<div class="t c" style="left:464px;top:621.5px">rate (3 MFs)</div>
<div class="t c" style="left:662px;top:407px">Mamdani</div>
<div class="t c" style="left:859px;top:503px">valve (5 MFs)</div>
<div class="t" style="left:561px;top:671px">System tank: 2 input, 1 output, 3 rules</div>
<div class="a" style="left:974px;top:121px;width:1px;height:599px;background:#7c7c7c"></div>
<!-- RIGHT PANEL -->
<div class="a" style="left:975px;top:121px;width:350px;height:576px;background:#f4f4f4"></div>
<div class="a" style="left:975px;top:121px;width:350px;height:22px;background:#fff"></div>
<div class="a" style="left:975px;top:143px;width:350px;height:1px;background:#b4b4b4"></div>
<div class="t" style="left:981px;top:125px;font-size:13px;color:#1f1f1f">PROPERTY EDITOR: FIS</div>
<svg style="left:1305px;top:125px" width="4" height="12"><rect x="0.8" y="0.8" width="2.4" height="2.4" fill="#666"/><rect x="0.8" y="4.8" width="2.4" height="2.4" fill="#666"/><rect x="0.8" y="8.8" width="2.4" height="2.4" fill="#666"/></svg>
<!-- PROPS -->
<div class="t" style="left:985.5px;top:156px">Type:</div>
<div class="t" style="left:1118.5px;top:156px">Mamdani Type-1</div>
<div class="t" style="left:985.5px;top:186px">Name</div>
<div class="a" style="left:1118px;top:181px;width:124px;height:22px;box-sizing:border-box;border:1px solid #7d7d7d;background:#fff"></div>
<div class="t" style="left:1124px;top:186px">tank</div>
<div class="t" style="left:985.5px;top:219px">And method</div>
<div class="a" style="left:1118px;top:214px;width:124px;height:22px;box-sizing:border-box;border:1px solid #7d7d7d;border-radius:0 4px 4px 0;background:#fff"></div><div class="a" style="left:1218px;top:215px;width:23px;height:20px;background:#f6f6f6;border-left:1px solid #7d7d7d;border-radius:0 3px 3px 0;box-sizing:border-box"></div><svg style="left:1225px;top:222px" width="10" height="7"><path d="M0.5 0.5H9L4.75 5.8Z" fill="#555"/></svg><div class="t" style="left:1124px;top:219px">prod</div>
<div class="t" style="left:985.5px;top:252px">Or method</div>
<div class="a" style="left:1118px;top:246px;width:124px;height:22px;box-sizing:border-box;border:1px solid #7d7d7d;border-radius:0 4px 4px 0;background:#fff"></div><div class="a" style="left:1218px;top:247px;width:23px;height:20px;background:#f6f6f6;border-left:1px solid #7d7d7d;border-radius:0 3px 3px 0;box-sizing:border-box"></div><svg style="left:1225px;top:254px" width="10" height="7"><path d="M0.5 0.5H9L4.75 5.8Z" fill="#555"/></svg><div class="t" style="left:1124px;top:252px">probor</div>
<div class="t" style="left:985.5px;top:284px">Implication method</div>
<div class="a" style="left:1118px;top:279px;width:124px;height:22px;box-sizing:border-box;border:1px solid #7d7d7d;border-radius:0 4px 4px 0;background:#fff"></div><div class="a" style="left:1218px;top:280px;width:23px;height:20px;background:#f6f6f6;border-left:1px solid #7d7d7d;border-radius:0 3px 3px 0;box-sizing:border-box"></div><svg style="left:1225px;top:287px" width="10" height="7"><path d="M0.5 0.5H9L4.75 5.8Z" fill="#555"/></svg><div class="t" style="left:1124px;top:284px">prod</div>
<div class="t" style="left:985.5px;top:317px">Aggregation method</div>
<div class="a" style="left:1118px;top:312px;width:124px;height:22px;box-sizing:border-box;border:1px solid #7d7d7d;border-radius:0 4px 4px 0;background:#fff"></div><div class="a" style="left:1218px;top:313px;width:23px;height:20px;background:#f6f6f6;border-left:1px solid #7d7d7d;border-radius:0 3px 3px 0;box-sizing:border-box"></div><svg style="left:1225px;top:320px" width="10" height="7"><path d="M0.5 0.5H9L4.75 5.8Z" fill="#555"/></svg><div class="t" style="left:1124px;top:317px">max</div>
<div class="t" style="left:985.5px;top:350px">Defuzzification method</div>
<div class="a" style="left:1118px;top:345px;width:124px;height:22px;box-sizing:border-box;border:1px solid #7d7d7d;border-radius:0 4px 4px 0;background:#fff"></div><div class="a" style="left:1218px;top:346px;width:23px;height:20px;background:#f6f6f6;border-left:1px solid #7d7d7d;border-radius:0 3px 3px 0;box-sizing:border-box"></div><svg style="left:1225px;top:353px" width="10" height="7"><path d="M0.5 0.5H9L4.75 5.8Z" fill="#555"/></svg><div class="t" style="left:1124px;top:350px">centroid</div>
<div class="t" style="left:985.5px;top:380px">Inputs:</div>
<div class="t" style="left:1118.5px;top:380px">2</div>
<div class="t" style="left:985.5px;top:406px">Outputs:</div>
<div class="t" style="left:1118.5px;top:406px">1</div>
<div class="t" style="left:985.5px;top:433px">Rules:</div>
<div class="t" style="left:1118.5px;top:433px">3</div>
<!-- bottom bar -->
<div class="a" style="left:0;top:697px;width:1325px;height:23px;background:#e5e5e5"></div>
<div class="a" style="left:0;top:696px;width:350px;height:1px;background:#fff"></div>
<div class="a" style="left:0;top:697px;width:350px;height:1px;background:#c8c8c8"></div>
<div class="a" style="left:351px;top:697px;width:623px;height:1px;background:#8a8a8a"></div>
<div class="a" style="left:975px;top:697px;width:350px;height:1px;background:#bdbdbd"></div>
<div class="a" style="left:350px;top:697px;width:1px;height:23px;background:#8a8a8a"></div>
<div class="a" style="left:974px;top:697px;width:1px;height:23px;background:#8a8a8a"></div>
<div class="a" style="left:975px;top:144px;width:1px;height:553px;background:#fff"></div>
<svg style="left:7px;top:703px" width="10" height="12"><rect x="0" y="0" width="2" height="12" fill="#999"/><path d="M9 0.3V11.7L2 6Z" fill="#999"/></svg>
<svg style="left:1310px;top:703px" width="10" height="12"><path d="M0.3 0.3V11.7L7 6Z" fill="#999"/><rect x="7" y="0" width="2" height="12" fill="#999"/></svg>
</body></html>
